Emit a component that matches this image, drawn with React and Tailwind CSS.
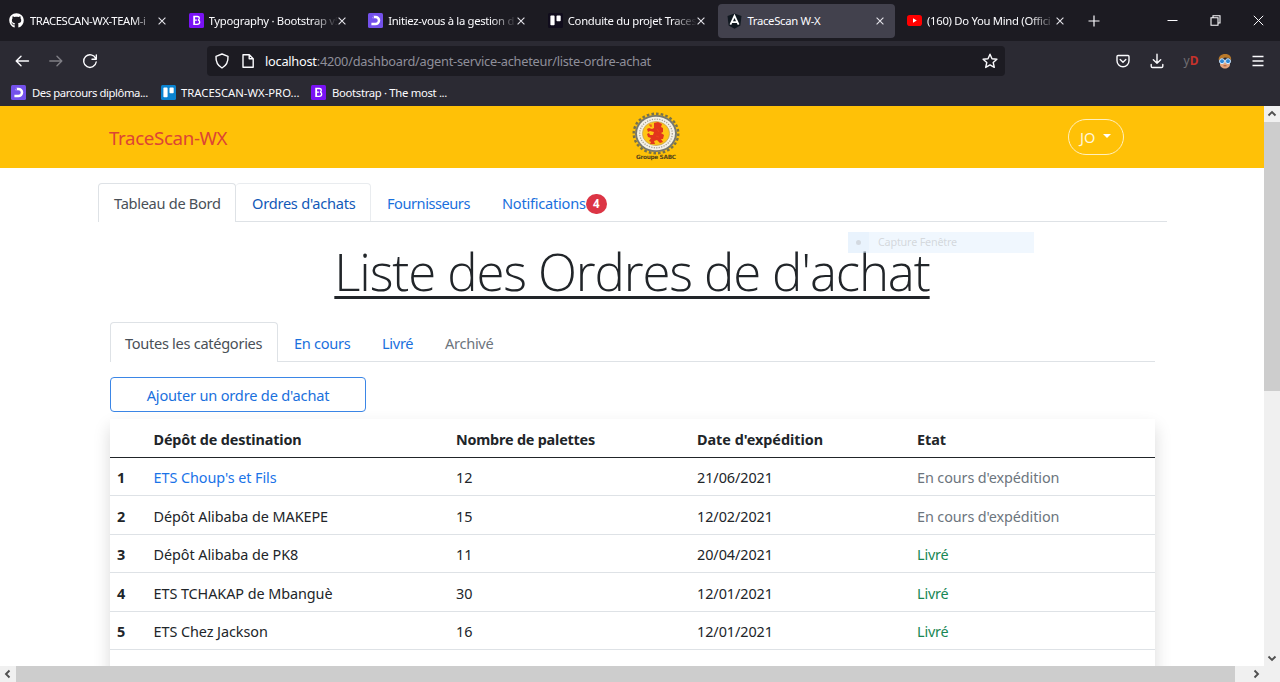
import React from "react";
import { FaGithub } from "react-icons/fa";

const BootstrapIcon = () => (
  <svg width="15" height="15" viewBox="0 0 15 15" className="shrink-0">
    <rect width="15" height="15" rx="1.5" fill="#7a12f5" />
    <path d="M4.9 3.5h3.3c1.3 0 2.1.7 2.1 1.8 0 .9-.6 1.5-1.3 1.7 1 .2 1.7.9 1.7 2 0 1.5-1 2.3-2.6 2.3H4.9zM5.1 7.1h2.8M5.4 3.8v7.2" fill="none" stroke="#fff" strokeWidth="1.3" />
  </svg>
);

const DiplomaIcon = () => (
  <svg width="15" height="15" viewBox="0 0 15 15" className="shrink-0">
    <rect width="15" height="15" rx="1.5" fill="#7451eb" />
    <path d="M4.6 3.9h2.8a3.6 3.6 0 0 1 0 7.2H3.4" fill="none" stroke="#fff" strokeWidth="2.5" />
    <path d="M3.2 2.4h2.6v3.6z" fill="#7451eb" />
  </svg>
);

const BoardIcon = ({ dark }) => (
  <svg width="15" height="15" viewBox="0 0 15 15" className="shrink-0">
    <rect width="15" height="15" rx="1.5" fill={dark ? "#100c1c" : "#0a83d0"} />
    <rect x="2.4" y="2.6" width="4.2" height="9.7" rx="0.8" fill="#fff" />
    <rect x="8.5" y="2.6" width="4.2" height="5.7" rx="0.8" fill="#fff" />
  </svg>
);

const AngularIcon = () => (
  <svg width="15" height="16" viewBox="0 0 15 16" className="shrink-0">
    <path d="M7.5.5l7 2.4-1.1 9.5-5.9 3.3-5.9-3.3L.5 2.9z" fill="#101820" />
    <path d="M3.4 11.6 7.5 2.9l4.1 8.7M5 9.1h5" fill="none" stroke="#fff" strokeWidth="1.8" />
  </svg>
);

const YoutubeIcon = () => (
  <svg width="15" height="15" viewBox="0 0 15 15" className="shrink-0">
    <rect y="2" width="15" height="11" rx="2.8" fill="#f00" />
    <path d="M6 5.3v4.4l3.8-2.2z" fill="#fff" />
  </svg>
);

const CloseIcon = () => (
  <svg width="8" height="8" viewBox="0 0 8 8" className="shrink-0">
    <path d="M.6.6l6.8 6.8M7.4.6L.6 7.4" stroke="#e4e3ea" strokeWidth="1.1" />
  </svg>
);

const browserTabs = [
  { icon: <FaGithub size={15} color="#fff" className="mr-[1px] shrink-0" />, title: "TRACESCAN-WX-TEAM-i", cls: "tracking-[-0.42px]" },
  { icon: <BootstrapIcon />, title: "Typography · Bootstrap v5", cls: "tracking-[-0.28px]" },
  { icon: <DiplomaIcon />, title: "Initiez-vous à la gestion d", cls: "tracking-[-0.33px]" },
  { icon: <BoardIcon dark />, title: "Conduite du projet Traces", cls: "tracking-[-0.3px]" },
  { icon: <AngularIcon />, title: "TraceScan W-X", cls: "tracking-[-0.3px]", active: true },
  { icon: <YoutubeIcon />, title: "(160) Do You Mind (Offici", cls: "tracking-[-0.3px]" },
];

function BrowserTab({ icon, title, cls, active }) {
  return (
    <div className="flex h-[41px] w-[179.6px] shrink-0 items-center">
      <div
        className={
          active
            ? "flex h-[34px] w-[177px] items-center rounded bg-[#42414d] pl-[9px] pr-[11px]"
            : "flex h-[34px] w-[177px] items-center pl-[9px] pr-[11px]"
        }
      >
        {icon}
        <div
          className={
            "ml-[5px] flex-1 overflow-hidden whitespace-nowrap pt-[1px] text-[11.3px] text-[#fbfbfe] " +
            cls +
            (active ? "" : " [mask-image:linear-gradient(to_right,#000_calc(100%-26px),transparent)]")
          }
        >
          {title}
        </div>
        <CloseIcon />
      </div>
    </div>
  );
}

function TabStrip() {
  return (
    <div className="flex h-[41px] items-center bg-[#1c1b22]">
      {browserTabs.map((t) => (
        <BrowserTab key={t.title} {...t} />
      ))}
      <div className="ml-[10.4px] flex w-[176px] shrink-0 items-center justify-between">
        <svg width="12" height="12" viewBox="0 0 12 12">
          <path d="M6 .5v11M.5 6h11" stroke="#fbfbfe" strokeWidth="1.2" />
        </svg>
        <div className="flex w-[97px] items-center justify-between">
          <svg width="11" height="11" viewBox="0 0 11 11">
            <path d="M.5 5.5h10" stroke="#fbfbfe" />
          </svg>
          <svg width="11" height="11" viewBox="0 0 11 11">
            <path d="M1 2.8h7v7.4H1zM3 2.8V.8h7v7.2H8" fill="none" stroke="#fbfbfe" strokeWidth="1.1" />
          </svg>
          <svg width="11" height="11" viewBox="0 0 11 11">
            <path d="M.8.8l9.4 9.4M10.2.8L.8 10.2" stroke="#fbfbfe" strokeWidth="1" />
          </svg>
        </div>
      </div>
    </div>
  );
}

const stroke = { fill: "none", stroke: "#fbfbfe", strokeWidth: 1.4, strokeLinecap: "round", strokeLinejoin: "round" };

function Toolbar() {
  return (
    <div className="flex h-[38px] items-center pl-[14px] pt-[1px]">
      <svg width="16" height="16" viewBox="0 0 16 16" {...stroke}>
        <path d="M14.500 8H2.300M7 3.300L2.200 8 7 12.700" />
      </svg>
      <svg width="16" height="16" viewBox="0 0 16 16" {...stroke} className="ml-[18px] opacity-40">
        <path d="M1.8 8h12M9 3.300L13.800 8 9 12.700" />
      </svg>
      <svg width="16" height="16" viewBox="0 0 16 16" {...stroke} className="ml-[18px]">
        <path d="M13.700 5.500A6.300 6.300 0 1 0 14.200 9M14.300 1.900v4.300H10" />
      </svg>
      <div className="ml-[109px] flex h-[30px] w-[798px] items-center rounded bg-[#1c1b22] pl-[7px] pr-[7px]">
        <svg width="16" height="16" viewBox="0 0 16 16" {...stroke}>
          <path d="M8 1l6 2.300c.3 5.400-1.700 9.400-6 11.700C3.700 12.700 1.700 8.700 2 3.300z" />
        </svg>
        <svg width="16" height="16" viewBox="0 0 16 16" {...stroke} className="ml-[10px]">
          <path d="M3 1.800h6.300L13.200 5.700v8.600H3zM9.200 2v3.800h3.800" />
        </svg>
        <div className="ml-[9px] flex-1 whitespace-nowrap pt-[2px] text-[12.8px] tracking-[-0.26px] text-[#8f8f9a]">
          <span className="text-[#fbfbfe]">localhost</span>:4200/dashboard/agent-service-acheteur/liste-ordre-achat
        </div>
        <svg width="16" height="16" viewBox="0 0 16 16" {...stroke}>
          <path d="M8 1.200l2 4.500 4.900.5-3.700 3.300 1.100 4.900L8 11.900l-4.300 2.500 1.100-4.900L1.100 6.200 6 5.700z" />
        </svg>
      </div>
      <div className="ml-[111px] flex w-[148px] items-center justify-between">
        <svg width="14" height="14" viewBox="0 0 14 14" {...stroke}>
          <path d="M2 1.500h10c.6 0 1 .4 1 1v4.200a6 6 0 0 1-12 0V2.500c0-.6.4-1 1-1zM4.200 5.600L7 8.300l2.800-2.700" />
        </svg>
        <svg width="14" height="16" viewBox="0 0 14 16" {...stroke}>
          <path d="M7 1.200v9M3.300 6.700L7 10.300l3.700-3.600M1.200 11.500v1.700c0 .8.600 1.300 1.300 1.300h9c.7 0 1.300-.5 1.300-1.300v-1.700" />
        </svg>
        <div className="text-[12px] leading-4 text-[#716f73]">
          y<span className="font-bold text-[#c5322c]">D</span>
        </div>
        <svg width="14" height="16" viewBox="0 0 14 16">
          <path d="M2 7h10v4.500c0 2-2.300 4-5 4s-5-2-5-4z" fill="#e5a47c" />
          <path d="M.8 7.500C.2 3.300 3 .9 7.300.9c4 0 6.400 2.500 5.800 6.600L11.500 5 7 4.400 2.300 6z" fill="#b9792a" />
          <circle cx="4" cy="8.200" r="2.500" fill="#2f86d4" stroke="#d6ecff" strokeWidth="1" />
          <circle cx="10" cy="8.200" r="2.500" fill="#2f86d4" stroke="#d6ecff" strokeWidth="1" />
          <path d="M5.500 12.800h3" stroke="#9a5137" />
        </svg>
        <svg width="12" height="12" viewBox="0 0 12 12" stroke="#fbfbfe" strokeWidth="1.300">
          <path d="M.5 1.500h11M.5 6h11M.5 10.500h11" />
        </svg>
      </div>
    </div>
  );
}

function Bookmarks() {
  return (
    <div className="flex h-[27px] items-center pl-[11px] text-[11.300px] whitespace-nowrap text-[#fbfbfe]">
      <div className="flex w-[150px] items-center gap-[6px] tracking-[-0.420px]">
        <DiplomaIcon />
        <span className="pt-[1px]">Des parcours diplôma...</span>
      </div>
      <div className="flex w-[150px] items-center gap-[5px] tracking-[0px]">
        <BoardIcon />
        <span className="pt-[1px]">TRACESCAN-WX-PRO...</span>
      </div>
      <div className="flex items-center gap-[6px] tracking-[-0.320px]">
        <BootstrapIcon />
        <span className="pt-[1px]">Bootstrap · The most ...</span>
      </div>
    </div>
  );
}

function GearLogo() {
  return (
    <svg width="50" height="50" viewBox="0 0 50 50">
      <ellipse cx="25" cy="21.500" rx="22.300" ry="19.800" fill="none" stroke="#77724a" strokeWidth="2.400" strokeDasharray="2.600 2.100" />
      <ellipse cx="25" cy="21.500" rx="21" ry="18.600" fill="#77786c" />
      <ellipse cx="25" cy="21.500" rx="19" ry="16.800" fill="#f4f0e6" />
      <ellipse cx="25" cy="21.500" rx="16.300" ry="14.300" fill="none" stroke="#a5a196" strokeWidth="1.300" strokeDasharray="1.200 1.300" />
      <ellipse cx="25" cy="21.500" rx="13.600" ry="12" fill="#ffc414" stroke="#b9a066" strokeWidth="0.700" />
      <path d="M23 11l4-1 4 2-1 3 2 1 0 4-2 1 3 2-1 4-2 0 2 3-3 1-3-3-3 1 1 3-5 0 1-2-2-1 2-3-3-1-1-3 2-1 1 2 3 0 1-3-4-1-2 1-1-3 2-1 3 1 2-1z" fill="#e2361c" />
      <path d="M18 13l2 0 0 2M26 17l2 3M25 24l3 1" fill="none" stroke="#e9431c" strokeWidth="1.200" />
      <text x="25" y="47" textAnchor="middle" textLength="40" className="font-['DejaVu_Sans'] text-[5.800px] font-bold" fill="#55451a">Groupe SABC</text>
    </svg>
  );
}

function SiteHeader() {
  return (
    <header className="flex h-[62px] shrink-0 items-center bg-[#ffc107] pl-[109px] pr-[140px]">
      <div className="w-[522px] pt-[3px] text-[18.700px] tracking-[-0.350px] text-[#dc4535]">TraceScan-WX</div>
      <GearLogo />
      <div className="ml-auto flex h-[36px] w-[56px] items-center rounded-full border border-[#fff0bd] pl-[11px] pt-[1px] text-[14.600px] text-[#fff6dc]">
        JO
        <svg width="8" height="4" viewBox="0 0 8 4" className="ml-[8px] -mt-[3px]">
          <path d="M0 0h8L4 4z" fill="#fff" />
        </svg>
      </div>
    </header>
  );
}

const rows = [
  ["ETS Choup's et Fils", "12", "21/06/2021", false],
  ["Dépôt Alibaba de MAKEPE", "15", "12/02/2021", false],
  ["Dépôt Alibaba de PK8", "11", "20/04/2021", true],
  ["ETS TCHAKAP de Mbanguè", "30", "12/01/2021", true],
  ["ETS Chez Jackson", "16", "12/01/2021", true],
];

const gridCols = "grid grid-cols-[36.500px_302.500px_241px_220px_1fr] items-center pl-[7px] whitespace-nowrap ";

function OrdersTable() {
  return (
    <div className="mt-[7px] h-[400px] w-[1045px] bg-white text-[14.400px] tracking-[-0.060px] text-[#212529] shadow-[0_8px_16px_rgba(0,0,0,0.15)]">
      <div className={gridCols + "h-[39px] border-b border-[#212529] pt-[4px] font-bold"}>
        <span />
        <span className="tracking-[-0.150px]">Dépôt de destination</span>
        <span className="tracking-[-0.200px]">Nombre de palettes</span>
        <span className="tracking-[-0.020px]">Date d'expédition</span>
        <span>Etat</span>
      </div>
      {rows.map(([name, count, date, done], i) => (
        <div key={name} className={gridCols + "h-[38.400px] border-b border-[#dee2e6] pt-[3px]"}>
          <b>{i + 1}</b>
          <span className={i === 0 ? "text-[#1a73e8]" : ""}>{name}</span>
          <span>{count}</span>
          <span>{date}</span>
          <span className={done ? "tracking-[-0.150px] text-[#198754]" : "tracking-[-0.100px] text-[#6c757d]"}>{done ? "Livré" : "En cours d'expédition"}</span>
        </div>
      ))}
    </div>
  );
}

function Page() {
  return (
    <div className="relative flex h-[560px] w-[1264px] flex-col overflow-hidden bg-white">
      <SiteHeader />
      <nav className="ml-[98px] mt-[15px] flex h-[39px] w-[1069px] shrink-0 border-b border-[#dee2e6] text-[14.600px] tracking-[-0.300px] whitespace-nowrap text-[#1a70dd]">
        <div className="h-[39px] w-[138px] rounded-t border border-b-0 border-[#dee2e6] bg-white pl-[15px] pt-[9px] text-[#495057]">Tableau de Bord</div>
        <div className="h-[38px] w-[135px] rounded-t border border-b-0 border-l-0 border-[#e9ecef] pl-[16px] pt-[9px] tracking-[-0.240px] text-[#1259b8]">Ordres d'achats</div>
        <div className="w-[131px] pl-[16px] pt-[10px] tracking-[-0.460px]">Fournisseurs</div>
        <div className="flex pt-[10px] tracking-[-0.240px]">
          Notifications
          <span className="mt-[1px] flex h-[20px] w-[21px] items-center justify-center rounded-full bg-[#dc3545] text-[11.500px] font-bold text-white">4</span>
        </div>
      </nav>
      <h1 className="mt-[15px] flex h-[70px] w-[1264px] shrink-0 justify-center font-['Open_Sans'] text-[51px] leading-[68px] font-light tracking-[-1.150px] text-[#212529]">
        <span className="underline decoration-[3px] underline-offset-[5px] [text-decoration-skip-ink:none]">Liste des Ordres de d'achat</span>
      </h1>
      <div className="ml-[110px] mt-[15px] flex w-[1045px] flex-col">
        <nav className="flex h-[40px] border-b border-[#dee2e6] text-[14.600px] tracking-[-0.300px] whitespace-nowrap text-[#1a70dd]">
          <div className="h-[40px] w-[168px] rounded-t border border-b-0 border-[#dee2e6] bg-white pl-[14px] pt-[10px] text-[#495057]">Toutes les catégories</div>
          <div className="w-[88px] pl-[16px] pt-[11px]">En cours</div>
          <div className="w-[63px] pl-[16px] pt-[11px]">Livré</div>
          <div className="pl-[16px] pt-[11px] text-[#6c757d]">Archivé</div>
        </nav>
        <button className="mt-[15px] flex h-[35px] w-[256px] items-center justify-center rounded border border-[#3b86e6] pt-[2px] text-[14.600px] tracking-[-0.190px] text-[#1a70dd]">
          Ajouter un ordre de d'achat
        </button>
        <OrdersTable />
      </div>
      <div className="absolute left-[848px] top-[126px] flex h-[21px] w-[186px] items-center bg-[#d9ecfd]/40 text-[10.800px] tracking-[-0.200px] text-[#a8a8a8]/40">
        <div className="flex h-full w-[21px] items-center justify-center bg-[#cfe6fb]/20">
          <div className="h-[5px] w-[5px] rounded-full bg-[#c4c8cd]/60" />
        </div>
        <span className="pl-[9px]">Capture Fenêtre</span>
      </div>
    </div>
  );
}

const Chevron = ({ d }) => (
  <svg width="16" height="16" viewBox="0 0 16 16" className="shrink-0">
    <path d={d} fill="none" stroke="#505050" strokeWidth="1.900" />
  </svg>
);

export default function App() {
  return (
    <div className="flex h-[682px] w-[1280px] flex-col overflow-hidden bg-white font-['Noto_Sans',sans-serif]">
      <div className="h-[106px] shrink-0 bg-[#2b2a33]">
        <TabStrip />
        <Toolbar />
        <Bookmarks />
      </div>
      <div className="flex h-[560px] shrink-0">
        <Page />
        <div className="flex w-[16px] flex-col bg-[#f0f0f0]">
          <Chevron d="M4.500 9.500L8 6l3.500 3.500" />
          <div className="h-[269px] bg-[#cdcdcd]" />
          <div className="mt-auto h-[16px]">
            <Chevron d="M4.500 6.500L8 10l3.500-3.500" />
          </div>
        </div>
      </div>
      <div className="flex h-[16px] shrink-0 bg-[#f0f0f0]">
        <Chevron d="M9.500 4.500L6 8l3.500 3.500" />
        <div className="w-[1219px] bg-[#cdcdcd]" />
        <div className="ml-[13px]">
          <Chevron d="M6.500 4.500L10 8l-3.500 3.500" />
        </div>
      </div>
    </div>
  );
}
